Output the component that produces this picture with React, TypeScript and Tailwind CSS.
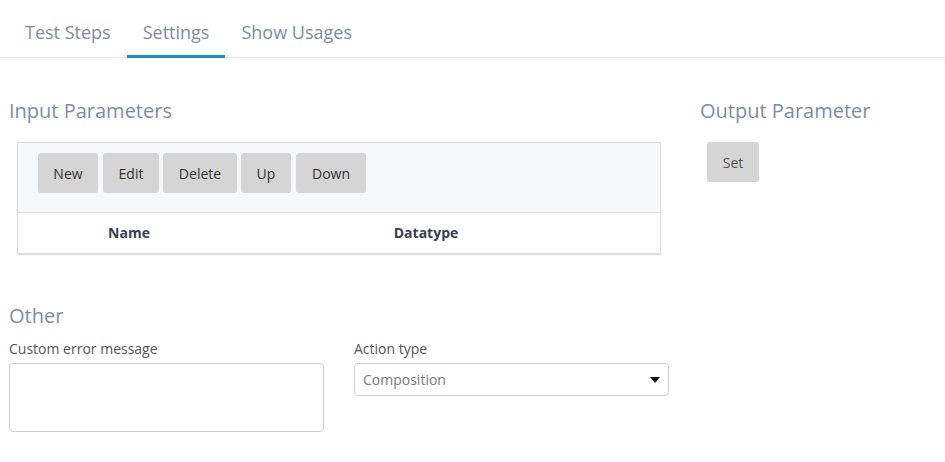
import { useState } from 'react';

const tabs = ['Test Steps', 'Settings', 'Show Usages'];
const toolButtons = [
  { label: 'New', cls: 'w-[60px]' },
  { label: 'Edit', cls: 'w-[56px] ml-[5px]' },
  { label: 'Delete', cls: 'w-[74px] ml-[4px]' },
  { label: 'Up', cls: 'w-[50px] ml-[4px]' },
  { label: 'Down', cls: 'w-[70px] ml-[5px]' },
];

export default function App() {
  const [activeTab, setActiveTab] = useState('Settings');
  const [actionType, setActionType] = useState('Composition');

  return (
    <div className="min-h-[462px] bg-white font-['Open_Sans',sans-serif] text-[#333]">
      <div className="flex border-b border-[#e6e6e6] pl-[9px] pt-2">
        {tabs.map(tab => (
          <button
            key={tab}
            onClick={() => setActiveTab(tab)}
            className={`-mb-px px-4 pt-3 pb-[11px] text-[18px] leading-6 text-[#7b8da3] border-b-[3px] ${activeTab === tab ? 'border-[#178dd0]' : 'border-transparent'}`}
          >
            {tab}
          </button>
        ))}
      </div>

      <div className="flex pl-[9px] pt-[39px]">
        <div className="w-[660px]">
          <h2 className="text-[20px] leading-7 text-[#7b8ea6]">Input Parameters</h2>
          <div className="ml-2 mt-[17px] w-[644px] border border-[#dcdcdc] shadow-[0_1px_1px_rgba(0,0,0,0.12)]">
            <div className="flex border-b border-[#dcdcdc] bg-[#f7f8fa] pl-5 pt-[10px] pb-[19px]">
              {toolButtons.map(b => (
                <button key={b.label} className={`${b.cls} h-10 rounded-[3px] bg-[#d5d5d5] pt-px text-sm text-[#333]`}>
                  {b.label}
                </button>
              ))}
            </div>
            <div className="flex h-10 items-center text-sm font-bold text-[#36404c]">
              <div className="w-[222px] text-center">Name</div>
              <div className="w-[372px] text-center">Datatype</div>
            </div>
          </div>

          <h2 className="mt-12 text-[20px] leading-7 text-[#7b8ea6]">Other</h2>
          <div className="mt-[9px] flex gap-[30px]">
            <div className="w-[315px]">
              <label className="block text-sm leading-5 text-[#555]">Custom error message</label>
              <textarea className="mt-1 block h-[69px] w-full resize-none rounded border border-[#cfcfcf]" />
            </div>
            <div className="w-[315px]">
              <label className="block text-sm leading-5 text-[#555]">Action type</label>
              <div className="relative mt-1">
                <select
                  value={actionType}
                  onChange={e => setActionType(e.target.value)}
                  className="block h-[33px] w-full appearance-none rounded border border-[#cfcfcf] bg-white pl-2 text-sm text-[#7a7a7a]"
                >
                  <option>Composition</option>
                  <option>Keyword</option>
                </select>
                <svg className="pointer-events-none absolute right-[9px] top-[14px]" width="10" height="6" viewBox="0 0 10 6">
                  <path d="M0 0h10L5 6z" fill="#111" />
                </svg>
              </div>
            </div>
          </div>
        </div>

        <div className="ml-[31px]">
          <h2 className="text-[20px] leading-7 text-[#7b8ea6]">Output Parameter</h2>
          <button className="ml-[7px] mt-[17px] h-10 w-[52px] rounded-[3px] bg-[#d5d5d5] pt-px text-sm text-[#555]">Set</button>
        </div>
      </div>
    </div>
  );
}
